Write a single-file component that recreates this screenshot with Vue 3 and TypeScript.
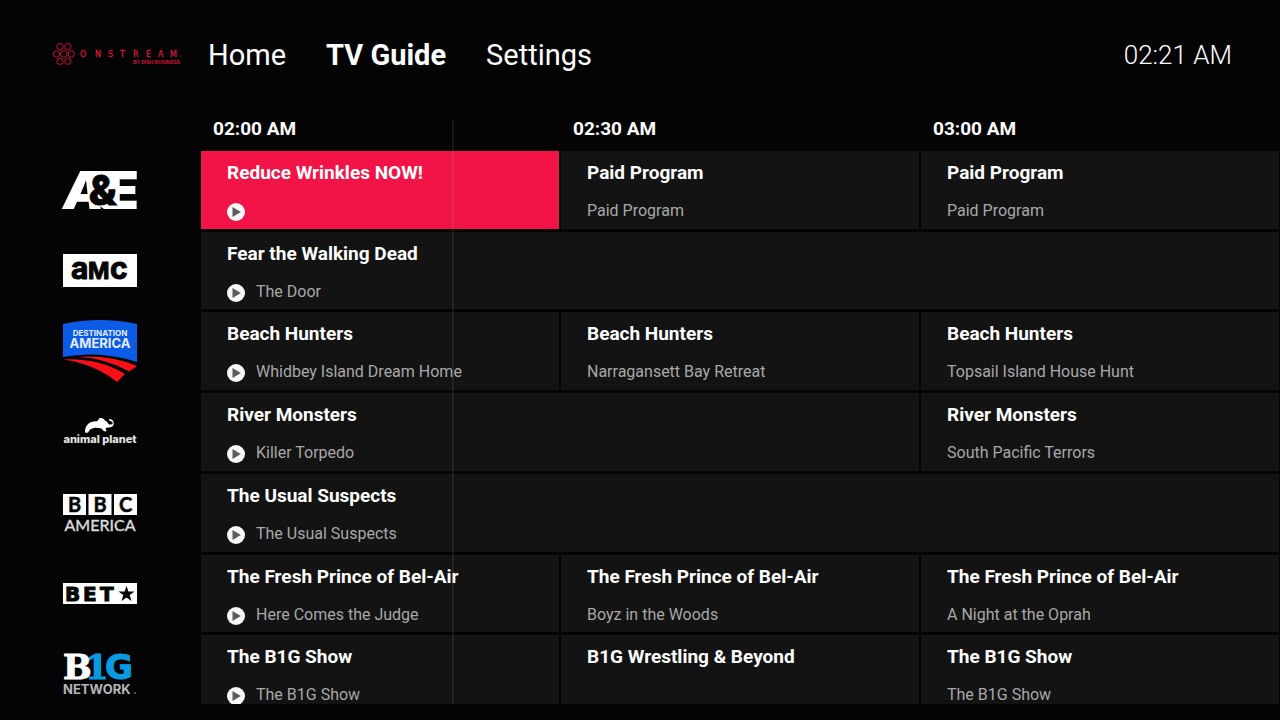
<script setup lang="ts">
interface Program {
  title: string
  episode?: string
  slots: number
  live?: boolean
}

interface Channel {
  id: string
  name: string
  programs: Program[]
}

const tabs = ['Home', 'TV Guide', 'Settings']
const activeTab = 'TV Guide'
const times = ['02:00 AM', '02:30 AM', '03:00 AM']

const minutesElapsed = 21
const minutesShown = 90
const nowPosition = `${(minutesElapsed / minutesShown) * 100}%`

const channels: Channel[] = [
  {
    id: 'ae',
    name: 'A&E',
    programs: [
      { title: 'Reduce Wrinkles NOW!', slots: 1, live: true },
      { title: 'Paid Program', episode: 'Paid Program', slots: 1 },
      { title: 'Paid Program', episode: 'Paid Program', slots: 1 },
    ],
  },
  {
    id: 'amc',
    name: 'AMC',
    programs: [{ title: 'Fear the Walking Dead', episode: 'The Door', slots: 3, live: true }],
  },
  {
    id: 'destination',
    name: 'Destination America',
    programs: [
      { title: 'Beach Hunters', episode: 'Whidbey Island Dream Home', slots: 1, live: true },
      { title: 'Beach Hunters', episode: 'Narragansett Bay Retreat', slots: 1 },
      { title: 'Beach Hunters', episode: 'Topsail Island House Hunt', slots: 1 },
    ],
  },
  {
    id: 'animal',
    name: 'Animal Planet',
    programs: [
      { title: 'River Monsters', episode: 'Killer Torpedo', slots: 2, live: true },
      { title: 'River Monsters', episode: 'South Pacific Terrors', slots: 1 },
    ],
  },
  {
    id: 'bbc',
    name: 'BBC America',
    programs: [{ title: 'The Usual Suspects', episode: 'The Usual Suspects', slots: 3, live: true }],
  },
  {
    id: 'bet',
    name: 'BET',
    programs: [
      { title: 'The Fresh Prince of Bel-Air', episode: 'Here Comes the Judge', slots: 1, live: true },
      { title: 'The Fresh Prince of Bel-Air', episode: 'Boyz in the Woods', slots: 1 },
      { title: 'The Fresh Prince of Bel-Air', episode: 'A Night at the Oprah', slots: 1 },
    ],
  },
  {
    id: 'big',
    name: 'Big Ten Network',
    programs: [
      { title: 'The B1G Show', episode: 'The B1G Show', slots: 1, live: true },
      { title: 'B1G Wrestling & Beyond', slots: 1 },
      { title: 'The B1G Show', episode: 'The B1G Show', slots: 1 },
    ],
  },
]
</script>

<template>
  <div class="screen">
    <header class="topbar">
      <svg class="brand" viewBox="0 0 130 24" role="img" aria-label="OnStream by DISH Business">
        <g fill="none" stroke="#c4123a" stroke-width="1">
          <circle cx="7" cy="3.7" r="3.2" />
          <circle cx="14.8" cy="3.7" r="3.2" />
          <circle cx="3.6" cy="11" r="3.2" />
          <circle cx="10.9" cy="11" r="3.2" />
          <circle cx="18.2" cy="11" r="3.2" />
          <circle cx="7" cy="18.2" r="3.2" />
          <circle cx="14.8" cy="18.2" r="3.2" />
        </g>
        <text class="brand-name" x="27 42 55 67 80 93 105 117" y="13.7">ONSTREAM</text>
        <text class="brand-sub" x="80" y="21">BY DISH BUSINESS</text>
        <circle cx="127.4" cy="13.2" r="0.6" fill="#c4123a" />
      </svg>
      <nav class="tabs">
        <a
          v-for="tab in tabs"
          :key="tab"
          href="#"
          class="tab"
          :class="{ active: tab === activeTab }"
          :aria-current="tab === activeTab ? 'page' : undefined"
        >{{ tab }}</a>
      </nav>
      <time class="clock">02:21 AM</time>
    </header>

    <main class="guide">
      <table class="schedule">
        <colgroup>
          <col class="channel-col" />
          <col v-for="time in times" :key="time" />
        </colgroup>
        <thead>
          <tr>
            <td></td>
            <th v-for="time in times" :key="time" scope="col" class="time">{{ time }}</th>
          </tr>
        </thead>
        <tbody>
          <tr v-for="(channel, row) in channels" :key="channel.id">
            <th scope="row" class="channel">
              <svg v-if="channel.id === 'ae'" class="logo" viewBox="0 0 74 38" role="img" :aria-label="channel.name">
                <path d="M20 0H48V38H41L30 30Z" fill="#fff" />
                <text y="38" class="ae-letter"><tspan x="0" class="ae-slant">A</tspan><tspan x="44">E</tspan></text>
                <text x="26" y="34" class="ae-and">&amp;</text>
              </svg>
              <svg v-else-if="channel.id === 'amc'" class="logo" viewBox="0 0 74 33" role="img" :aria-label="channel.name">
                <rect width="74" height="33" fill="#fff" />
                <text y="25" class="amc-name"><tspan x="8">a</tspan><tspan x="25" class="amc-mid">M</tspan><tspan x="47">c</tspan></text>
              </svg>
              <svg v-else-if="channel.id === 'destination'" class="logo" viewBox="0 0 74 62" role="img" :aria-label="channel.name">
                <path d="M0 4Q37 -4 74 4V42Q37 30 0 37Z" fill="#0b5be6" />
                <path d="M0 39.5Q36 38 62 54L54 62Q32 44 0 39.5Z" fill="#f80f18" />
                <path d="M15 36.8Q48 35 74 46L66 51.5Q43 38.5 15 36.8Z" fill="#f80f18" />
                <text x="37" y="15.5" class="dest-top">DESTINATION</text>
                <text x="37" y="28" class="dest-main">AMERICA</text>
              </svg>
              <svg v-else-if="channel.id === 'animal'" class="logo" viewBox="0 0 74 28" role="img" :aria-label="channel.name">
                <path d="M22 14C22 7 27 3 34 3.400C36 2 35 0 38 0C40 0 41 1 42.500 3C45 3 44 7 48 6.500C51 6 50 3.400 47 3C46 2.600 45.500 1.500 46.500 1C50 1 52 5 50 7.700C48 10 44 9 42.500 10.500L43.500 13C42 14 40 13 39 10.700C35 9.500 31 9 27 11.500L25 14.500C24 15 22.500 15 22 14Z" fill="#fff" />
                <text x="37" y="25" class="animal-name">animal planet</text>
              </svg>
              <svg v-else-if="channel.id === 'bbc'" class="logo" viewBox="0 0 74 38" role="img" :aria-label="channel.name">
                <rect width="23" height="21" fill="#fff" />
                <rect x="25.500" width="23" height="21" fill="#fff" />
                <rect x="51" width="23" height="21" fill="#fff" />
                <text x="11.500" y="17.500" class="bbc-block">B</text>
                <text x="37" y="17.500" class="bbc-block">B</text>
                <text x="62.500" y="17.500" class="bbc-block">C</text>
                <text x="37" y="37" class="bbc-name">AMERICA</text>
              </svg>
              <svg v-else-if="channel.id === 'bet'" class="logo" viewBox="0 0 74 21" role="img" :aria-label="channel.name">
                <rect width="74" height="21" fill="#fff" />
                <text x="2 20 37" y="17.800" class="bet-name">BET</text>
                <path d="M63.500 3L65.400 8.400H71.500L66.700 12L68.500 18L63.500 14.400L58.500 18L60.300 12L55.500 8.400H61.600Z" fill="#050505" />
              </svg>
              <svg v-else class="logo" viewBox="0 0 74 42" role="img" :aria-label="channel.name">
                <text y="26" class="big-letter"><tspan x="22" class="big-blue">1</tspan><tspan x="42" class="big-blue big-sans">G</tspan><tspan x="0">B</tspan></text>
                <text x="0" y="41" class="big-name">NETWORK</text>
                <circle cx="72" cy="40" r="0.8" fill="#b4b6b8" />
              </svg>
            </th>
            <td
              v-for="(program, index) in channel.programs"
              :key="index"
              :colspan="program.slots"
              class="cell"
              :class="{ selected: row === 0 && index === 0 }"
            >
              <button type="button" class="program">
                <span class="title">{{ program.title }}</span>
                <span class="detail">
                  <svg v-if="program.live" class="play" viewBox="0 0 18 18" aria-hidden="true">
                    <circle cx="9" cy="9" r="9" fill="#f7f7f7" />
                    <path d="M5.500 4L13.800 9L5.500 14Z" fill="#5c5c5c" />
                  </svg>
                  <span v-if="program.episode" class="episode">{{ program.episode }}</span>
                </span>
              </button>
            </td>
          </tr>
        </tbody>
      </table>
      <div class="timeline" aria-hidden="true">
        <div class="now" :style="{ left: nowPosition }"></div>
      </div>
    </main>
  </div>
</template>

<style>
body {
  margin: 0;
  background: #040404;
}
</style>

<style scoped>
.screen {
  display: flex;
  flex-direction: column;
  box-sizing: border-box;
  height: 100vh;
  padding-bottom: 16px;
  overflow: hidden;
  background: #040404;
  color: #fff;
  font-family: Roboto, "Noto Sans", sans-serif;
}

.topbar {
  display: flex;
  flex: none;
  align-items: center;
  box-sizing: border-box;
  height: 117px;
  padding: 0 48px 8px 53px;
}

.brand {
  flex: none;
  width: 130px;
  height: 24px;
}

.brand-name {
  fill: #d4143f;
  stroke: #d4143f;
  stroke-width: 0.3px;
  font: 8px "DejaVu Sans", sans-serif;
}

.brand-sub {
  fill: #d4143f;
  font: bold 5px "Liberation Sans", sans-serif;
}

.tabs {
  display: flex;
  flex: 1;
  gap: 40px;
  margin-left: 25px;
}

.tab {
  color: #fff;
  font-size: 29px;
  line-height: 36px;
  text-decoration: none;
}

.tab.active {
  font-weight: 700;
}

.clock {
  font-size: 26px;
  font-weight: 300;
  line-height: 36px;
}

.guide {
  position: relative;
  flex: 1;
  min-height: 0;
  overflow: hidden;
}

.schedule {
  width: calc(100% + 1px);
  height: calc(100% + 12px);
  table-layout: fixed;
  border-collapse: separate;
  border-spacing: 2px 3px;
}

.schedule th,
.schedule td {
  padding: 0;
}

.channel-col {
  width: 197px;
}

.schedule .time {
  height: 28px;
  padding: 0 0 10px 12px;
  box-sizing: border-box;
  font-size: 19px;
  font-weight: 700;
  line-height: 18px;
  text-align: left;
}

.schedule .channel {
  padding-right: 1px;
  vertical-align: middle;
}

.logo {
  display: block;
  width: 74px;
  margin: 0 auto;
  overflow: visible;
}

.cell {
  vertical-align: top;
  background: #131313;
}

.cell.selected {
  background: #f21446;
}

.program {
  display: flex;
  flex-direction: column;
  gap: 15px;
  width: 100%;
  padding: 11px 12px 0 26px;
  border: 0;
  background: transparent;
  color: inherit;
  font-family: inherit;
  text-align: left;
}

.title {
  font-size: 19px;
  font-weight: 700;
  line-height: 22px;
}

.detail {
  display: flex;
  gap: 11px;
  height: 24px;
}

.play {
  flex: none;
  width: 18px;
  height: 18px;
  margin-top: 4px;
}

.episode {
  color: #a8a8a8;
  font-size: 16px;
  line-height: 24px;
}

.timeline {
  position: absolute;
  inset: 3px 1px 0 201px;
  pointer-events: none;
}

.now {
  position: absolute;
  top: 0;
  bottom: 0;
  width: 2px;
  margin-left: -1px;
  background: rgba(144, 144, 144, 0.14);
}

.ae-letter {
  fill: #fff;
  font: 900 52px Inter, sans-serif;
}

.ae-slant {
  font-style: italic;
}

.ae-and {
  fill: #050505;
  stroke: #050505;
  stroke-width: 1px;
  font: 900 42px Roboto, sans-serif;
}

.amc-name {
  fill: #050505;
  stroke: #050505;
  stroke-width: 1px;
  font: 700 30px Inter, sans-serif;
}

.amc-mid {
  font-size: 23px;
}

.dest-top {
  fill: #e4edfd;
  font: 700 8px Inter, sans-serif;
  text-anchor: middle;
}

.dest-main {
  fill: #e4edfd;
  font: 700 13px Inter, sans-serif;
  text-anchor: middle;
}

.animal-name {
  fill: #e4e4e4;
  font: 800 11px Inter, sans-serif;
  text-anchor: middle;
}

.bbc-block {
  fill: #050505;
  stroke: #050505;
  stroke-width: 0.5px;
  font: 700 20px Lato, sans-serif;
  text-anchor: middle;
}

.bbc-name {
  fill: #dcdcdc;
  stroke: #dcdcdc;
  stroke-width: 0.4px;
  font: 400 16px Lato, sans-serif;
  text-anchor: middle;
}

.bet-name {
  fill: #050505;
  stroke: #050505;
  stroke-width: 1px;
  font: bold 20px "DejaVu Sans", sans-serif;
}

.big-letter {
  fill: #fff;
  stroke: #fff;
  stroke-width: 1px;
  font: bold 34px "DejaVu Serif", serif;
}

.big-blue {
  fill: #0a9ae0;
  stroke: #0a9ae0;
}

.big-sans {
  font-family: "DejaVu Sans", sans-serif;
}

.big-name {
  fill: #b4b6b8;
  font: 700 13px Inter, sans-serif;
}
</style>
